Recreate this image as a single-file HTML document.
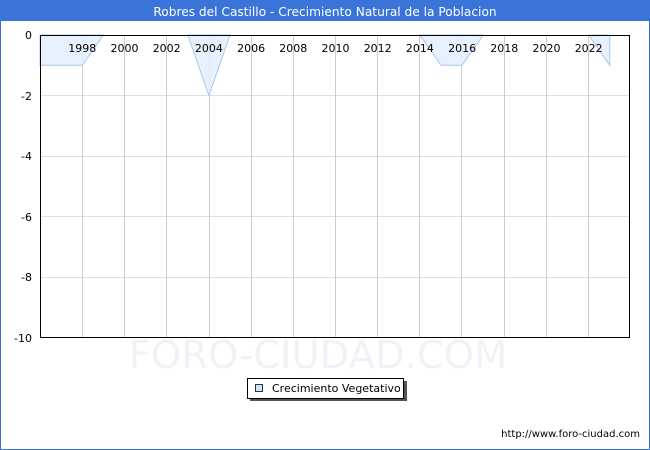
<!DOCTYPE html>
<html><head><meta charset="utf-8"><style>
html,body{margin:0;padding:0;background:#fff;}
svg{display:block;font-family:"DejaVu Sans","Liberation Sans",sans-serif;}
</style></head><body>
<svg width="650" height="450" viewBox="0 0 650 450" xmlns="http://www.w3.org/2000/svg">
<rect x="0.5" y="0.5" width="649" height="449" fill="#fff" stroke="#3a74d8"/>
<rect x="0" y="0" width="650" height="21" fill="#3a74d8"/>
<text x="325" y="16" fill="#fff" font-size="12.2" text-anchor="middle">Robres del Castillo - Crecimiento Natural de la Poblacion</text>
<g stroke="#e0e0e0" stroke-width="1">
<line x1="40" y1="95.5" x2="630" y2="95.5"/>
<line x1="40" y1="156.5" x2="630" y2="156.5"/>
<line x1="40" y1="216.5" x2="630" y2="216.5"/>
<line x1="40" y1="277.5" x2="630" y2="277.5"/>
</g>
<g stroke="#cccccc" stroke-width="1">
<line x1="82.5" y1="35" x2="82.5" y2="338"/><line x1="124.5" y1="35" x2="124.5" y2="338"/>
<line x1="166.5" y1="35" x2="166.5" y2="338"/><line x1="209.5" y1="35" x2="209.5" y2="338"/>
<line x1="251.5" y1="35" x2="251.5" y2="338"/><line x1="293.5" y1="35" x2="293.5" y2="338"/>
<line x1="335.5" y1="35" x2="335.5" y2="338"/><line x1="377.5" y1="35" x2="377.5" y2="338"/>
<line x1="419.5" y1="35" x2="419.5" y2="338"/><line x1="461.5" y1="35" x2="461.5" y2="338"/>
<line x1="504.5" y1="35" x2="504.5" y2="338"/><line x1="546.5" y1="35" x2="546.5" y2="338"/>
<line x1="588.5" y1="35" x2="588.5" y2="338"/>
</g>
<g fill="#e4f0fd" fill-opacity="0.9" stroke="#a8c6f0" stroke-width="1">
<polygon points="40,35 40,65.3 82.3,65.3 103.4,35"/>
<polygon points="187.8,35 208.9,95.6 230,35"/>
<polygon points="419.9,35 441,65.3 462.1,65.3 483.2,35"/>
<polygon points="588.7,35 609.8,65.3 609.8,35"/>
</g>
<rect x="40.5" y="35.5" width="589" height="302" fill="none" stroke="#000"/>
<g font-size="11" fill="#000" text-anchor="middle">
<text x="82.3" y="52">1998</text><text x="124.5" y="52">2000</text><text x="166.7" y="52">2002</text>
<text x="208.9" y="52">2004</text><text x="251.1" y="52">2006</text><text x="293.3" y="52">2008</text>
<text x="335.5" y="52">2010</text><text x="377.7" y="52">2012</text><text x="419.9" y="52">2014</text>
<text x="462.1" y="52">2016</text><text x="504.3" y="52">2018</text><text x="546.5" y="52">2020</text>
<text x="588.7" y="52">2022</text>
</g>
<g font-size="11" fill="#000" text-anchor="end">
<text x="32" y="39">0</text><text x="32" y="100">-2</text><text x="32" y="160">-4</text>
<text x="32" y="221">-6</text><text x="32" y="281">-8</text><text x="32" y="342">-10</text>
</g>
<text x="318" y="368" font-size="38.5" fill="#f0f2f8" text-anchor="middle">FORO-CIUDAD.COM</text>
<rect x="250" y="381" width="157" height="20" fill="#555"/>
<rect x="247.5" y="378.5" width="156" height="20" fill="#fff" stroke="#000"/>
<rect x="255.5" y="384.5" width="7" height="7" fill="#cfe3fb" stroke="#333"/>
<text x="272" y="392" font-size="11" fill="#000">Crecimiento Vegetativo</text>
<text x="640" y="437" font-size="10" fill="#000" text-anchor="end">http://www.foro-ciudad.com</text>
</svg>
</body></html>
